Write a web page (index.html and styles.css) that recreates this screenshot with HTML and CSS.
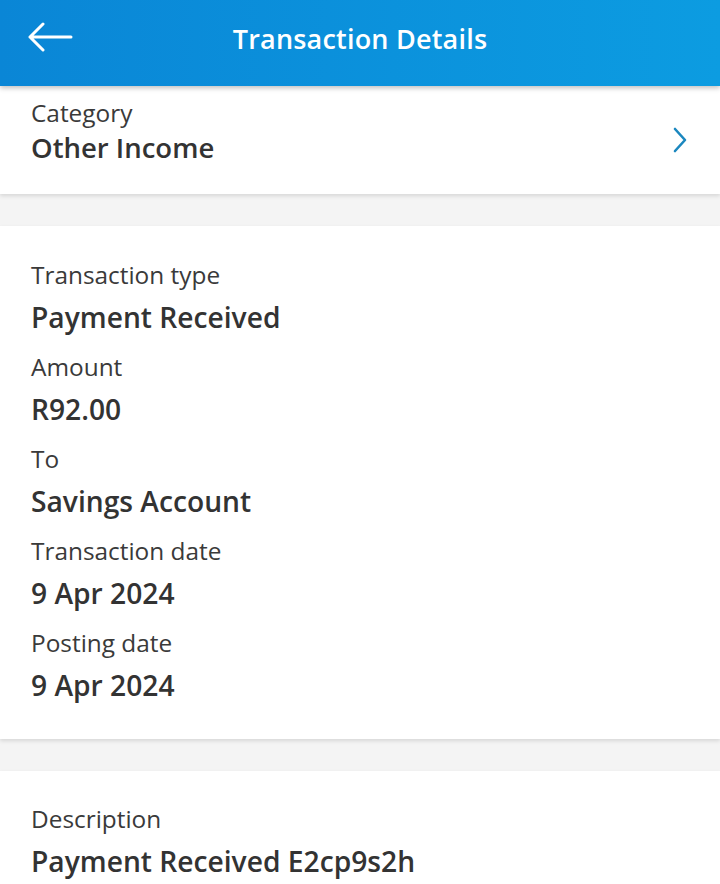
FILE: index.html
```html
<!DOCTYPE html>
<html lang="en">
<head>
    <meta charset="UTF-8">
    <meta name="viewport" content="width=device-width, initial-scale=1.0">
    <title>Transaction Details</title>
    <link rel="stylesheet" href="styles.css">
</head>
<body>
    <!-- top bar -->
    <header class="topbar">
        <a class="back" href="#">
            <svg width="46" height="30" viewBox="0 0 46 30">
                <path d="M44 15H3M16 2L3 15l13 13" fill="none" stroke="#fff" stroke-width="3" stroke-linecap="round" stroke-linejoin="round"/>
            </svg>
        </a>
        <h1>Transaction Details</h1>
    </header>

    <!-- category -->
    <section class="card category">
        <div>
            <div class="label">Category</div>
            <div class="value">Other Income</div>
        </div>
        <svg class="chevron" width="16" height="28" viewBox="0 0 16 28">
            <path d="M3 3l10 11L3 25" fill="none" stroke="#1b87bf" stroke-width="2.6" stroke-linecap="round" stroke-linejoin="round"/>
        </svg>
    </section>

    <!-- details -->
    <section class="card details">
        <div class="field">
            <div class="label">Transaction type</div>
            <div class="value">Payment Received</div>
        </div>
        <div class="field">
            <div class="label">Amount</div>
            <div class="value">R92.00</div>
        </div>
        <div class="field">
            <div class="label">To</div>
            <div class="value">Savings Account</div>
        </div>
        <div class="field">
            <div class="label">Transaction date</div>
            <div class="value">9 Apr 2024</div>
        </div>
        <div class="field">
            <div class="label">Posting date</div>
            <div class="value">9 Apr 2024</div>
        </div>
    </section>

    <!-- description -->
    <section class="card description">
        <div class="field">
            <div class="label">Description</div>
            <div class="value">Payment Received E2cp9s2h</div>
        </div>
    </section>
</body>
</html>
```

FILE: styles.css
```css
/* page */
body {
    margin: 0;
    font-family: "Open Sans", "Noto Sans", sans-serif;
    background-color: #f4f4f4;
    color: #333;
    height: 884px;
    overflow: hidden;
}

/* top bar */
.topbar {
    position: relative;
    z-index: 2;
    height: 86px;
    display: flex;
    align-items: center;
    justify-content: center;
    background: linear-gradient(90deg, #0a86d6, #0c9ce1);
    box-shadow: 0 2px 5px rgba(0, 0, 0, 0.25);
}

.back {
    position: absolute;
    left: 27px;
    top: 22px;
    display: block;
    line-height: 0;
}

.topbar h1 {
    margin: 0 0 10px 0;
    font-size: 27px;
    font-weight: 600;
    color: #fff;
    letter-spacing: 0.2px;
}

/* cards */
.card {
    background-color: #fff;
    padding: 0 31px;
    box-shadow: 0 2px 4px rgba(0, 0, 0, 0.12);
}

.label {
    font-size: 24.4px;
    color: #3a3a3a;
    line-height: 42px;
}

.value {
    font-size: 28.2px;
    font-weight: 600;
    color: #333;
    line-height: 42px;
}

.field + .field {
    margin-top: 8px;
}

/* category row */
.category {
    height: 108px;
    display: flex;
    align-items: flex-start;
    justify-content: space-between;
    padding-top: 10px;
    padding-right: 32px;
    box-sizing: border-box;
}

.category .label {
    line-height: 34px;
}

.category .value {
    font-size: 27.5px;
    line-height: 36px;
}

.chevron {
    margin-top: 30px;
}

.details {
    margin-top: 32px;
    padding-top: 28px;
    padding-bottom: 33px;
}

.description {
    margin-top: 32px;
    padding-top: 27px;
    padding-bottom: 40px;
}
```
